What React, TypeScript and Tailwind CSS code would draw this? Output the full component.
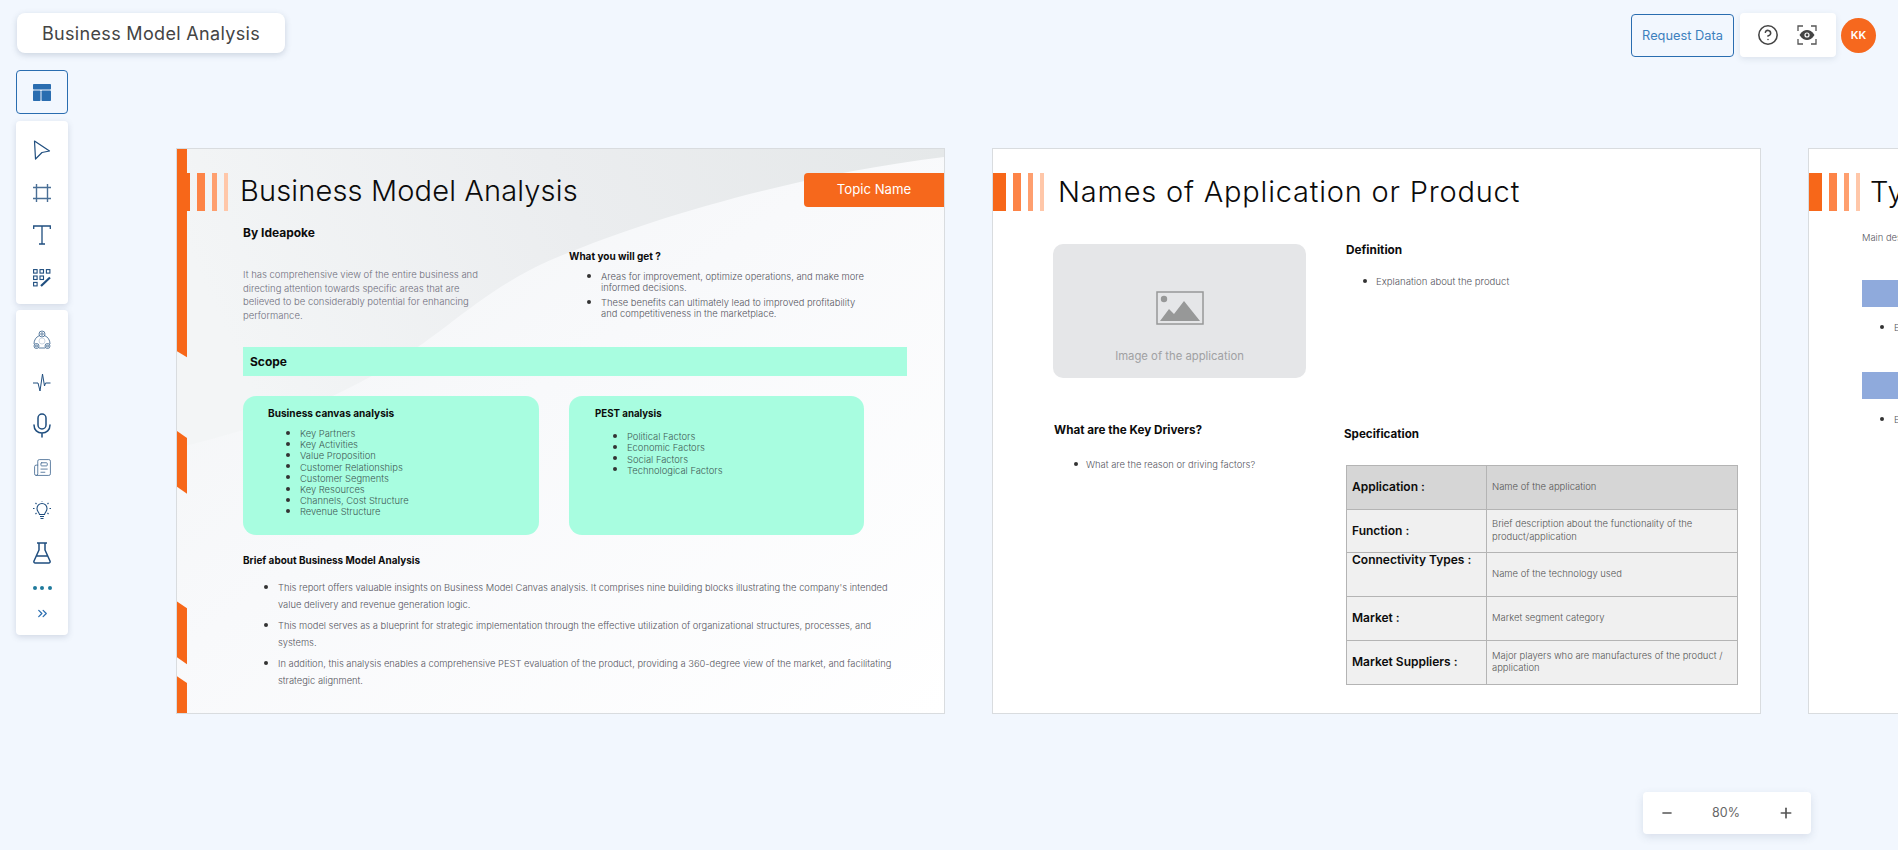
import { ChevronsRight, CircleHelp, Minus, Newspaper, Plus } from "lucide-react"
import type { ReactNode } from "react"

const iconColor = "#1f4e7f"

function Bullets({ items, className, gap = "", dot = "left-[18px] top-[2.5px]" }: { items: string[]; className: string; gap?: string; dot?: string }) {
  return (
    <ul className={`flex flex-col ${gap}`}>
      {items.map((item, i) => (
        <li key={i} className={`relative ${className}`}>
          <span className={`absolute w-[4px] h-[4px] rounded-full bg-[#333333] ${dot}`} />
          {item}
        </li>
      ))}
    </ul>
  )
}

function SlideHeader({ title, children, titleClass }: { title: string; children?: ReactNode; titleClass: string }) {
  return (
    <div className="flex items-start pt-[24px]">
      <div className="flex h-[38px] w-[52px] shrink-0">
        <div className="w-[13px] bg-[#f76719]" />
        <div className="w-[8px] ml-[7px] bg-[#fd8447]" />
        <div className="w-[5px] ml-[7px] bg-[#fe9f6f]" />
        <div className="w-[4px] ml-[7px] bg-[#ffc7a9]" />
      </div>
      <h1 className={`whitespace-nowrap font-light text-[#0b0b0b] h-[38px] leading-[38px] ${titleClass}`}>{title}</h1>
      {children}
    </div>
  )
}

function TableRow({ label, value, shade, labelTop, short }: { label: string; value: string; shade?: boolean; labelTop?: boolean; short?: boolean }) {
  return (
    <div className={`flex border-b border-[#b4b4b4] ${short ? "h-[43px]" : "h-[44px]"} ${shade ? "bg-[#d6d6d6]" : "bg-[#f0f0f0]"}`}>
      <div className={`w-[140px] shrink-0 pl-[5px] flex border-r border-[#b4b4b4] text-[12px] font-semibold text-[#0c0c0c] ${labelTop ? "items-start leading-[14px]" : "items-center pb-[1px]"}`}>
        {label}
      </div>
      <div className="flex-1 pl-[5px] pr-[10px] pb-[1px] flex items-center text-[9.450px] leading-[12.500px] font-light text-[#555555]">{value}</div>
    </div>
  )
}

function ToolButton({ children }: { children: ReactNode }) {
  return <div className="h-[42.5px] flex items-center justify-center">{children}</div>
}

export default function App() {
  return (
    <div className="w-[1898px] h-[850px] overflow-hidden bg-[#f2f7fe] flex flex-col font-['Inter',sans-serif]">
      {/* Top bar */}
      <div className="flex justify-between items-start h-[70px] shrink-0 pt-[13px] pl-[17px] pr-[22px]">
        <div className="w-[268px] h-[40px] bg-white rounded-[8px] shadow-[0_2px_6px_rgba(60,80,110,0.22)] flex items-center justify-center text-[18px] text-[#444444] tracking-[0.33px]">
          Business Model Analysis
        </div>
        <div className="flex items-start">
          <div className="w-[103px] h-[43px] mt-[1px] border border-[#2a6db0] rounded-[4px] flex items-center justify-center text-[12.800px] text-[#3d80bd]">
            Request Data
          </div>
          <div className="ml-[6px] w-[96px] h-[44px] bg-white rounded-[4px] shadow-[0_2px_6px_rgba(60,80,110,0.12)] flex items-center pl-[17px] gap-[18px]">
            <CircleHelp size={22} strokeWidth={1.7} color="#444444" />
            <svg width="20" height="20" viewBox="0 0 20 20" fill="none">
              <path d="M1 6V1h5M14 1h5v5M19 14v5h-5M6 19H1v-5" stroke="#555555" strokeWidth="1.300" />
              <path d="M2.500 10C5 6 7.500 5 10 5s5 1 7.500 5c-2.500 4-5 5-7.500 5s-5-1-7.500-5Z" fill="#444444" />
              <circle cx="10" cy="10" r="2.600" fill="#ffffff" />
              <circle cx="10" cy="10" r="1.400" fill="#444444" />
            </svg>
          </div>
          <div className="ml-[5px] mt-[5px] w-[35px] h-[35px] rounded-full bg-[#f6681e] flex items-center justify-center text-[11px] font-semibold text-white">
            KK
          </div>
        </div>
      </div>

      <div className="flex flex-1 min-h-0">
        {/* Left toolbars */}
        <div className="w-[176px] shrink-0 pl-[16px]">
          <div className="w-[52px] h-[44px] border border-[#2a6db0] rounded-[4px] flex items-center justify-center">
            <svg width="18" height="17" viewBox="0 0 18 17" fill="#2a6db0">
              <rect x="0" y="0" width="18" height="5.500" rx="0.800" />
              <rect x="0" y="6.500" width="7.500" height="10.500" rx="0.800" />
              <rect x="8.500" y="6.500" width="9.500" height="10.500" rx="0.800" />
            </svg>
          </div>
          <div className="w-[52px] h-[183px] mt-[7px] bg-white rounded-[4px] shadow-[0_2px_6px_rgba(60,80,110,0.18)] pt-[8px]">
            <ToolButton>
              <svg width="18" height="20" viewBox="0 0 18 20" fill="none" stroke={iconColor} strokeWidth="1.200" strokeLinejoin="round">
                <path d="M1.500 1 16.500 11 9 12.500 2.500 19Z" />
              </svg>
            </ToolButton>
            <ToolButton>
              <svg width="18" height="18" viewBox="0 0 18 18" fill="none" stroke="#4a6f96" strokeWidth="1.400">
                <path d="M3.500 0v18M14.500 0v18M0 3.500h18M0 14.500h18" />
              </svg>
            </ToolButton>
            <ToolButton>
              <svg width="18" height="20" viewBox="0 0 18 20" fill="none" stroke={iconColor} strokeWidth="1.300">
                <path d="M.7 4V1h16.600v3M9 1v18M6 19h6" />
              </svg>
            </ToolButton>
            <ToolButton>
              <svg width="18" height="18" viewBox="0 0 18 18" fill="none" stroke={iconColor} strokeWidth="1.100">
                <rect x="0.600" y="0.600" width="3.500" height="3.500" />
                <rect x="7" y="0.600" width="3.500" height="3.500" />
                <rect x="13.400" y="0.600" width="3.500" height="3.500" />
                <rect x="0.600" y="7" width="3.500" height="3.500" />
                <rect x="7" y="7" width="3.500" height="3.500" />
                <rect x="0.600" y="13.400" width="3.500" height="3.500" />
                <path d="M8 17 17 8.500" strokeWidth="2.200" />
              </svg>
            </ToolButton>
          </div>
          <div className="w-[52px] h-[325px] mt-[6px] bg-white rounded-[4px] shadow-[0_2px_6px_rgba(60,80,110,0.18)] pt-[9px]">
            <ToolButton>
              <svg width="18" height="20" viewBox="0 0 18 20" fill="none" stroke="#4a6f96" strokeWidth="0.900">
                <circle cx="9" cy="4" r="3" />
                <circle cx="9" cy="4" r="1.200" />
                <circle cx="3.500" cy="16" r="2.500" />
                <circle cx="3.500" cy="16" r="1" />
                <circle cx="14.500" cy="16" r="2.500" />
                <circle cx="14.500" cy="16" r="1" />
                <path d="M6.500 5.500C3 7 1 10 1 14M11.500 5.500C15 7 17 10 17 14M6 18h6" />
                <circle cx="9" cy="11" r="3" stroke="#c7d3e0" />
              </svg>
            </ToolButton>
            <ToolButton>
              <svg width="18" height="20" viewBox="0 0 18 20" fill="none" stroke={iconColor} strokeWidth="1">
                <path d="M0 10h5l2 8 2.500-17 2 12 1-3h5" />
              </svg>
            </ToolButton>
            <ToolButton>
              <svg width="18" height="25" viewBox="0 0 18 25" fill="none" stroke={iconColor} strokeWidth="1.500" strokeLinecap="round">
                <rect x="5" y="1" width="8" height="15" rx="4" />
                <path d="M1 12c0 5 3.500 8 8 8s8-3 8-8M9 20v4" />
              </svg>
            </ToolButton>
            <ToolButton>
              <Newspaper size={19} strokeWidth={1.100} color="#4a6f96" />
            </ToolButton>
            <ToolButton>
              <svg width="18" height="18" viewBox="0 0 18 18" fill="none" stroke={iconColor} strokeWidth="1.100">
                <path d="M6.500 13.500C6 11 4 10.500 4 7.500a5 5 0 0 1 10 0c0 3-2 3.500-2.500 6ZM7 15.500h4M7.500 17.500h3" />
                <path d="M0 7.500h1.500M16.500 7.500H18M2.500 2 3.500 3M15.500 2 14.500 3M2.500 13 3.500 12M15.500 13 14.500 12M9 0v.500" />
              </svg>
            </ToolButton>
            <ToolButton>
              <svg width="18" height="22" viewBox="0 0 18 22" fill="none" stroke={iconColor} strokeWidth="1.500" strokeLinejoin="round">
                <path d="M4 1h10M6 1v7L1 19c-.4 1 .2 2 1.200 2h13.600c1 0 1.600-1 1.200-2L12 8V1M3.500 14h11" />
              </svg>
            </ToolButton>
            <div className="flex justify-center gap-[3.500px] h-[4px] mt-[12px]">
              <div className="w-[4px] h-[4px] rounded-full bg-[#1f7a9c]" />
              <div className="w-[4px] h-[4px] rounded-full bg-[#1f7a9c]" />
              <div className="w-[4px] h-[4px] rounded-full bg-[#1f7a9c]" />
            </div>
            <div className="flex justify-center mt-[16px]">
              <ChevronsRight size={15} strokeWidth={2} color="#2a6db0" />
            </div>
          </div>
        </div>

        <div className="flex-1 min-w-0 flex flex-col">
          {/* Slides */}
          <div className="flex gap-[47px] mt-[78px] h-[566px] shrink-0">
            {/* Slide 1 */}
            <div className="relative w-[769px] shrink-0 border border-[#d9dcdf] overflow-hidden bg-white">
              <svg className="absolute inset-0 w-full h-full" viewBox="0 0 768 566" preserveAspectRatio="none">
                <defs>
                  <linearGradient id="base" x1="0" y1="0" x2="1" y2="1">
                    <stop offset="0" stopColor="#f2f4f5" />
                    <stop offset="0.450" stopColor="#f8f9fb" />
                    <stop offset="1" stopColor="#ffffff" />
                  </linearGradient>
                  <linearGradient id="swoosh" gradientUnits="userSpaceOnUse" x1="768" y1="0" x2="100" y2="300">
                    <stop offset="0" stopColor="#e5e8e9" />
                    <stop offset="0.500" stopColor="#ebedef" />
                    <stop offset="1" stopColor="#f3f5f6" />
                  </linearGradient>
                </defs>
                <rect width="768" height="566" fill="url(#base)" />
                <path d="M0 0H768V8C620 26 470 70 373 112C300 145 270 185 200 225C130 265 60 285 0 300Z" fill="url(#swoosh)" />
                <g fill="#f76719">
                  <path d="M0 0H10V209L0 203Z" />
                  <path d="M0 283 10 290V346L0 339Z" />
                  <path d="M0 454 10 461V517L0 510Z" />
                  <path d="M0 529 10 536V566H0Z" />
                </g>
              </svg>
              <div className="relative">
                <SlideHeader title="Business Model Analysis" titleClass="ml-[11px] -mt-[1px] text-[29px] tracking-[0.15px]">
                  <div className="ml-auto w-[140px] h-[34px] rounded-l-[4px] bg-[#f6681c] flex items-center justify-center text-[13.200px] text-white">
                    Topic Name
                  </div>
                </SlideHeader>
                <div className="pl-[66px] pt-[14px]">
                  <div className="flex h-[122px]">
                    <div className="w-[326px] shrink-0">
                      <h3 className="text-[12px] leading-[16px] font-bold text-[#0c0c0c]">By Ideapoke</h3>
                      <p className="mt-[27px] w-[240px] text-[9.500px] leading-[13.700px] font-light text-[#6f6f7d]">
                        It has comprehensive view of the entire business and directing attention towards specific areas that are believed to be considerably potential for enhancing performance.
                      </p>
                    </div>
                    <div className="pt-[23px]">
                      <h3 className="text-[10px] leading-[16px] font-bold text-[#0c0c0c]">What you will get ?</h3>
                      <div className="mt-[7px] w-[302px]">
                        <Bullets
                          className="pl-[32px] text-[9.400px] leading-[11px] font-light text-[#555560]"
                          gap="gap-[4px]"
                          items={[
                            "Areas for improvement, optimize operations, and make more informed decisions.",
                            "These benefits can ultimately lead to improved profitability and competitiveness in the marketplace.",
                          ]}
                        />
                      </div>
                    </div>
                  </div>
                  <div className="w-[664px] h-[29px] bg-[#a8fde0] flex items-center pl-[7px] text-[12px] font-bold text-[#0c0c0c]">Scope</div>
                  <div className="flex mt-[20px]">
                    <div className="w-[296px] h-[139px] rounded-[13px] bg-[#a8fde0] pl-[25px] pt-[9px]">
                      <h4 className="text-[10.100px] leading-[16px] font-bold text-[#0c0c0c]">Business canvas analysis</h4>
                      <div className="mt-[7px]">
                        <Bullets
                          className="pl-[32px] text-[9.400px] leading-[11.200px] font-light text-[#3f5a55]"
                          items={["Key Partners", "Key Activities", "Value Proposition", "Customer Relationships", "Customer Segments", "Key Resources", "Channels, Cost Structure", "Revenue Structure"]}
                        />
                      </div>
                    </div>
                    <div className="ml-[30px] w-[295px] h-[139px] rounded-[13px] bg-[#a8fde0] pl-[26px] pt-[10px]">
                      <h4 className="text-[9.700px] leading-[16px] font-bold text-[#0c0c0c]">PEST analysis</h4>
                      <div className="mt-[9px]">
                        <Bullets
                          className="pl-[32px] text-[9.400px] leading-[11.300px] font-light text-[#3f5a55]"
                          items={["Political Factors", "Economic Factors", "Social Factors", "Technological Factors"]}
                        />
                      </div>
                    </div>
                  </div>
                  <h3 className="mt-[17px] text-[9.950px] leading-[16px] font-bold text-[#0c0c0c]">Brief about Business Model Analysis</h3>
                  <div className="mt-[11px] w-[640px] ml-[12px]">
                    <Bullets
                      className="pl-[23px] text-[9.350px] leading-[17px] font-light text-[#555560]"
                      dot="left-[9px] top-[5.5px]"
                      gap="gap-[4px]"
                      items={[
                        "This report offers valuable insights on Business Model Canvas analysis. It comprises nine building blocks illustrating the company's intended value delivery and revenue generation logic.",
                        "This model serves as a blueprint for strategic implementation through the effective utilization of organizational structures, processes, and systems.",
                        "In addition, this analysis enables a comprehensive PEST evaluation of the product, providing a 360-degree view of the market, and facilitating strategic alignment.",
                      ]}
                    />
                  </div>
                </div>
              </div>
            </div>

            {/* Slide 2 */}
            <div className="w-[769px] shrink-0 border border-[#d9dcdf] bg-white">
              <SlideHeader title="Names of Application or Product" titleClass="ml-[13px] text-[29px] tracking-[0.8px]" />
              <div className="flex pl-[60px] pt-[33px]">
                <div className="w-[253px] shrink-0">
                  <div className="h-[134px] rounded-[10px] bg-[#e5e6e8] flex flex-col items-center pt-[47px]">
                    <svg width="48" height="34" viewBox="0 0 48 34">
                      <rect x="1" y="1" width="46" height="32" fill="none" stroke="#979898" strokeWidth="1.500" />
                      <circle cx="8" cy="8" r="3.200" fill="#979898" />
                      <path d="M4 30 13 18 18 23 28 10 44 30Z" fill="#979898" />
                    </svg>
                    <div className="mt-[24px] text-[11.300px] leading-[14px] text-[#a0a1a3]">Image of the application</div>
                  </div>
                  <h3 className="mt-[44px] ml-[1px] text-[11.700px] leading-[16px] font-bold text-[#0c0c0c]">What are the Key Drivers?</h3>
                  <div className="mt-[21px] w-[240px]">
                    <Bullets className="pl-[33px] text-[9.400px] leading-[12px] font-light text-[#555560]" dot="left-[21px] top-[3px]" items={["What are the reason or driving factors?"]} />
                  </div>
                </div>
                <div className="ml-[40px] flex-1">
                  <h3 className="text-[11.800px] leading-[12px] font-bold text-[#0c0c0c]">Definition</h3>
                  <div className="mt-[20px]">
                    <Bullets className="pl-[30px] text-[9.600px] leading-[12px] font-light text-[#555560]" dot="left-[17px] top-[3px]" items={["Explanation about the product"]} />
                  </div>
                  <div className="mt-[138px] -ml-[2px] text-[11.600px] leading-[16px] font-bold text-[#0c0c0c]">Specification</div>
                  <div className="mt-[23px] w-[392px] border-t border-x border-[#b4b4b4]">
                    <TableRow shade label="Application :" value="Name of the application" />
                    <TableRow short label="Function :" value="Brief description about the functionality of the product/application" />
                    <TableRow labelTop label="Connectivity Types :" value="Name of the technology used" />
                    <TableRow label="Market :" value="Market segment category" />
                    <TableRow label="Market Suppliers :" value="Major players who are manufactures of the product / application" />
                  </div>
                </div>
              </div>
            </div>

            {/* Slide 3, cut off by the window */}
            <div className="w-[768px] shrink-0 border border-[#d9dcdf] bg-white">
              <SlideHeader title="Types of Application" titleClass="ml-[9px] text-[29px] tracking-[0.8px]" />
              <div className="pl-[53px] pt-[20px]">
                <p className="text-[9.400px] leading-[14px] font-light text-[#555560]">Main description of the types</p>
                <div className="mt-[35px] w-[640px] h-[27px] bg-[#8faadc]" />
                <div className="mt-[15px]">
                  <Bullets className="pl-[32px] text-[9.400px] leading-[12px] font-light text-[#555560]" dot="left-[18px] top-[3px]" items={["Explanation"]} />
                </div>
                <div className="mt-[38px] w-[640px] h-[27px] bg-[#8faadc]" />
                <div className="mt-[15px]">
                  <Bullets className="pl-[32px] text-[9.400px] leading-[12px] font-light text-[#555560]" dot="left-[18px] top-[3px]" items={["Explanation"]} />
                </div>
              </div>
            </div>
          </div>

          {/* Zoom control */}
          <div className="flex justify-end pr-[87px] mt-[78px]">
            <div className="w-[168px] h-[42px] bg-white rounded-[4px] shadow-[0_3px_8px_rgba(60,80,110,0.14)] flex items-center justify-between px-[17px] text-[12.500px] text-[#666666]">
              <Minus size={14} strokeWidth={2.500} color="#555555" />
              <span>80%</span>
              <Plus size={16} strokeWidth={2.500} color="#555555" />
            </div>
          </div>
        </div>
      </div>
    </div>
  )
}
